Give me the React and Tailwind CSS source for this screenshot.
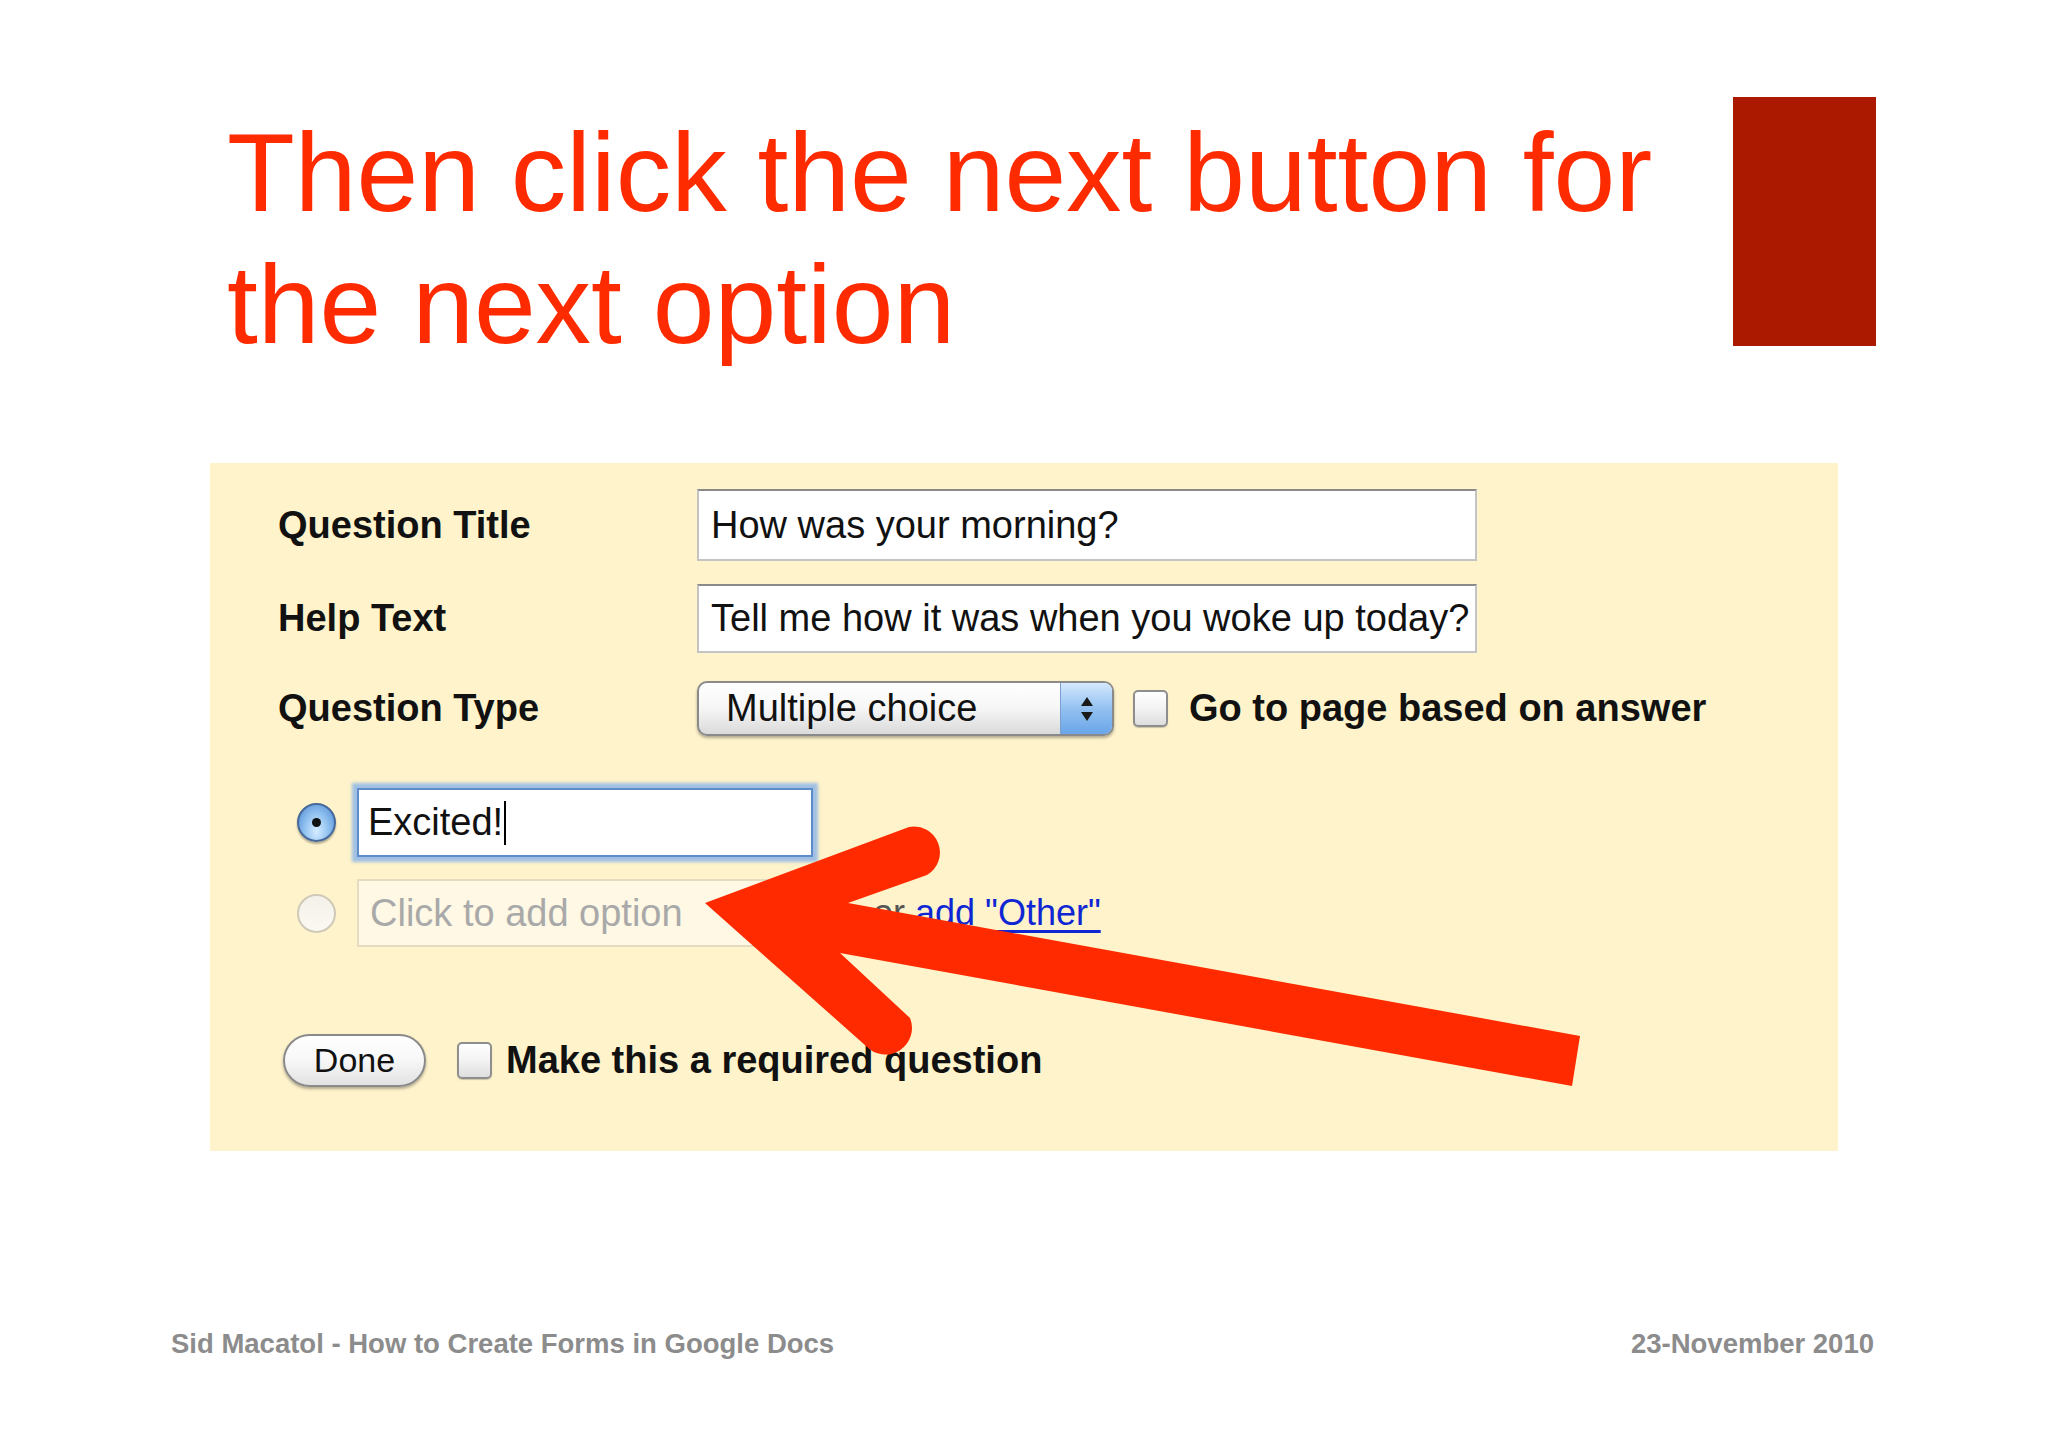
import React from 'react';

function Checkbox() {
    return (
        <span className="block w-[35px] h-[37px] shrink-0 rounded-[5px] border-2 border-[#8e8e8e] bg-linear-to-b from-white via-[#f3f3f3] to-[#dedede] shadow-[0_1px_1px_rgba(0,0,0,0.2)]" />
    );
}

function Radio({ checked = false }) {
    if (checked) {
        return (
            <span className="relative flex items-center justify-center w-[39px] h-[39px] shrink-0 rounded-full border-2 border-[#46699a] bg-radial-[at_50%_75%] from-[#d6ecff] via-[#8fc0f0] to-[#4c86cf] shadow-[0_2px_2px_rgba(0,0,0,0.3)]">
                <span className="w-[9px] h-[9px] rounded-full bg-[#111]" />
            </span>
        );
    }
    return (
        <span className="block w-[39px] h-[39px] shrink-0 rounded-full border-2 border-[#cfc9b8] bg-linear-to-b from-[#f4f1ea] to-[#fbf9f2]" />
    );
}

function FieldRow({ label, children }) {
    return (
        <div className="flex items-center">
            <div className="w-[419px] shrink-0 text-[38px] font-bold text-[#111]">{label}</div>
            {children}
        </div>
    );
}

export default function App() {
    return (
        <div className="relative w-[2048px] h-[1447px] overflow-hidden bg-white font-['Liberation_Sans',Arial,sans-serif]">
            <header className="flex items-start justify-between h-[371px] pt-[97px] pl-[227px] pr-[172px]">
                <h1 className="mt-[10px] text-[111px] leading-[132px] font-normal text-[#ff2b00]">
                    Then click the next button for
                    <br />
                    the next option
                </h1>
                <div className="w-[143px] h-[249px] shrink-0 bg-[#ab1a00]" />
            </header>

            <section className="ml-[210px] mt-[92px] w-[1628px] h-[688px] bg-[#fef3cb] pt-[26px] pl-[68px]">
                <div className="flex flex-col gap-[23px]">
                    <FieldRow label="Question Title">
                        <div className="flex items-center w-[780px] h-[72px] pl-[12px] bg-white border-2 border-[#c4c4c4] border-t-[#8a8a8a] text-[38px] text-[#111]">
                            How was your morning?
                        </div>
                    </FieldRow>
                    <FieldRow label="Help Text">
                        <div className="flex items-center w-[780px] h-[69px] pl-[12px] bg-white border-2 border-[#c4c4c4] border-t-[#8a8a8a] text-[38px] text-[#111] whitespace-nowrap">
                            Tell me how it was when you woke up today?
                        </div>
                    </FieldRow>
                </div>

                <div className="mt-[27px]">
                    <FieldRow label="Question Type">
                        <div className="flex w-[417px] h-[55px] overflow-hidden rounded-[10px] border-2 border-[#8a8a8a] bg-linear-to-b from-white via-[#f6f6f6] to-[#dadada] shadow-[0_2px_3px_rgba(0,0,0,0.3)]">
                            <span className="flex-1 flex items-center pl-[27px] text-[38px] text-[#111]">Multiple choice</span>
                            <span className="flex flex-col items-center justify-center gap-[6px] w-[52px] border-l border-[#7c9fd0] bg-linear-to-b from-[#d5e8fc] via-[#93c1f1] to-[#6aa5e8]">
                                <svg width="12" height="9" viewBox="0 0 12 9"><path d="M6 0 L12 9 L0 9 Z" fill="#1a1a1a" /></svg>
                                <svg width="12" height="9" viewBox="0 0 12 9"><path d="M0 0 L12 0 L6 9 Z" fill="#1a1a1a" /></svg>
                            </span>
                        </div>
                        <span className="ml-[19px]"><Checkbox /></span>
                        <span className="ml-[21px] text-[38px] font-bold text-[#111] whitespace-nowrap">Go to page based on answer</span>
                    </FieldRow>
                </div>

                <div className="mt-[51px] ml-[19px] flex flex-col gap-[22px]">
                    <div className="flex items-center gap-[21px]">
                        <Radio checked />
                        <div className="flex items-center w-[456px] h-[69px] pl-[9px] bg-white border-2 border-[#5d8ccb] shadow-[0_0_3px_5px_#a0bfe3] text-[38px] text-[#111]">
                            Excited!
                            <span className="ml-[1px] w-[2px] h-[44px] bg-black" />
                        </div>
                    </div>
                    <div className="flex items-center gap-[21px]">
                        <Radio />
                        <div className="flex items-center w-[465px] h-[68px] pl-[11px] bg-[#fef8e5] border-2 border-[#e4dbc1] text-[38px] text-[#a9a9a9]">
                            Click to add option
                        </div>
                        <span className="ml-[30px] text-[36px] text-[#555]">
                            or{' '}
                            <a href="#" className="text-[#1026d4] underline underline-offset-[5px]">add "Other"</a>
                        </span>
                    </div>
                </div>

                <div className="mt-[85px] ml-[5px] flex items-center">
                    <button className="flex items-center justify-center w-[143px] h-[53px] rounded-full border-2 border-[#8a8a8a] bg-linear-to-b from-white via-[#f7f7f7] to-[#e2e2e2] shadow-[0_2px_3px_rgba(0,0,0,0.3)] text-[34px] text-[#111]">
                        Done
                    </button>
                    <span className="ml-[31px]"><Checkbox /></span>
                    <span className="ml-[14px] text-[38px] font-bold text-[#111]">Make this a required question</span>
                </div>
            </section>

            <footer className="mt-[177px] flex justify-between pl-[171px] pr-[174px] text-[27.5px] leading-[32px] font-bold text-[#8c8c8c]">
                <span>Sid Macatol - How to Create Forms in Google Docs</span>
                <span>23-November 2010</span>
            </footer>

            <svg className="absolute inset-0 w-full h-full pointer-events-none" viewBox="0 0 2048 1447">
                <path
                    d="M705 903 L909 827 A26 26 0 0 1 927 875 L848 903 L1580 1036 L1572 1086 L840 953 L910 1018 A26.5 26.5 0 0 1 866 1046 Z"
                    fill="#ff2a00"
                />
            </svg>
        </div>
    );
}
